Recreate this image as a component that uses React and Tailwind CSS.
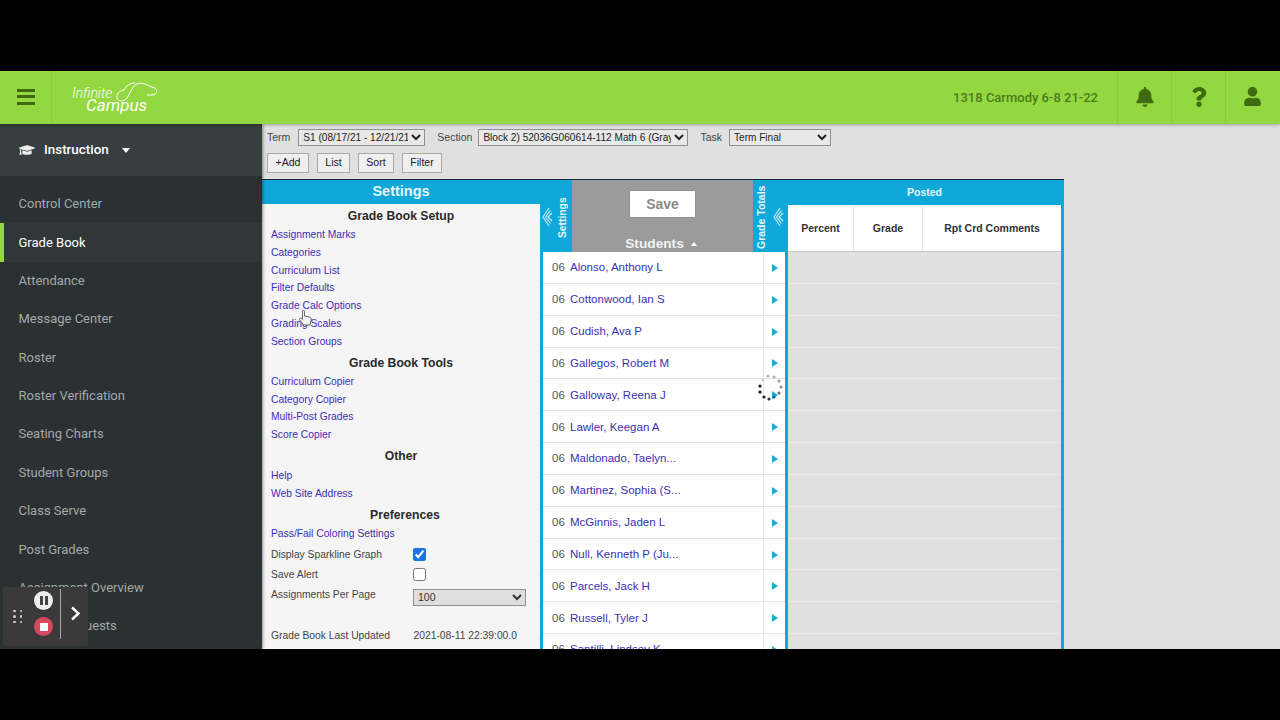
import React from "react";
import { FaBell, FaGraduationCap, FaQuestion, FaUser } from "react-icons/fa";

const navItems = [
  "Control Center",
  "Grade Book",
  "Attendance",
  "Message Center",
  "Roster",
  "Roster Verification",
  "Seating Charts",
  "Student Groups",
  "Class Serve",
  "Post Grades",
  "Assignment Overview",
  "Course Requests",
];

const students = [
  "Alonso, Anthony L",
  "Cottonwood, Ian S",
  "Cudish, Ava P",
  "Gallegos, Robert M",
  "Galloway, Reena J",
  "Lawler, Keegan A",
  "Maldonado, Taelyn...",
  "Martinez, Sophia (S...",
  "McGinnis, Jaden L",
  "Null, Kenneth P (Ju...",
  "Parcels, Jack H",
  "Russell, Tyler J",
  "Santilli, Lindsey K",
];

const setup = ["Assignment Marks", "Categories", "Curriculum List", "Filter Defaults", "Grade Calc Options", "Grading Scales", "Section Groups"];
const tools = ["Curriculum Copier", "Category Copier", "Multi-Post Grades", "Score Copier"];
const other = ["Help", "Web Site Address"];

const spinnerDots = [
  [23, 5, "#b5b5b5"], [29, 6, "#b5b5b5"], [34, 10, "#a0a0a0"], [36, 16, "#909090"],
  [34, 22, "#707070"], [29, 26, "#1b5fa8"], [24, 28, "#333"], [19, 26, "#222"],
  [15, 21, "#111"], [15, 15, "#111"], [18, 9, "#d0d0d0"],
];

function DoubleChevron() {
  return (
    <svg width="11" height="20" viewBox="0 0 11 20" fill="none" stroke="#d8eef8" strokeWidth="1.1">
      <polyline points="7,1 1,10 7,19" />
      <polyline points="8.5,3.5 3.5,10 8.5,16.5" />
      <polyline points="10,6 6,10 10,14" />
    </svg>
  );
}

function LinkList({ items }) {
  return (
    <ul>
      {items.map((name) => (
        <li key={name} className="h-[17.8px] leading-[17.8px] text-[#3a2fb5]">{name}</li>
      ))}
    </ul>
  );
}

function SectionTitle({ children, className }) {
  return <h3 className={`text-center text-[12.2px] font-bold text-[#2a2a2a] ${className}`}>{children}</h3>;
}

function ToolButton({ children, className }) {
  return (
    <button className={`h-[20px] border border-[#a8a8a8] bg-[#efefef] text-[10.5px] text-[#222] ${className}`}>
      {children}
    </button>
  );
}

export default function App() {
  return (
    <div className="relative h-[720px] w-[1280px] overflow-hidden bg-black py-[71px] font-['Liberation_Sans',sans-serif]">
      <div className="flex h-[578px] flex-col overflow-hidden bg-[#e0e0e0]">
        {/* Header */}
        <header className="z-20 flex h-[53px] shrink-0 items-stretch bg-[#93d840] shadow-[0_1px_3px_rgba(0,0,0,0.3)]">
          <div className="flex w-[52px] items-center justify-center border-r border-[#88cb3a] pb-[2px]">
            <div className="flex w-[18px] flex-col gap-[3.5px]">
              <span className="h-[3px] bg-[#3f6b10]" />
              <span className="h-[3px] bg-[#3f6b10]" />
              <span className="h-[3px] bg-[#3f6b10]" />
            </div>
          </div>
          <div className="relative ml-[20px] flex w-[86px] flex-col pt-[16px] font-['Roboto',sans-serif] italic text-white">
            <span className="text-[14px] font-light leading-[12px]">Infinite</span>
            <span className="ml-[14px] text-[17px] leading-[12px]">Campus</span>
            <svg className="absolute left-[44px] top-[11px]" width="42" height="21" viewBox="0 0 42 21" fill="none" stroke="#fff" strokeWidth="1">
              <path d="M8 8 C3 9 0 12 1 16 C2 20 8 20 11 16 C14 12 16 3 22 1.5 C29 0 33 5 39 6 C42 8 41 13 36 13 L31 13" />
              <path d="M8 8 C10 4 14 1 19 1" />
            </svg>
          </div>
          <div className="ml-auto flex items-center pr-[19px] font-['Roboto',sans-serif] text-[13px] font-medium text-[#4b7a1c]">
            1318 Carmody 6-8 21-22
          </div>
          <div className="flex w-[54px] items-center justify-center border-l border-[#88cb3a] pb-[2px] text-[#3f6b10]"><FaBell size={20} /></div>
          <div className="flex w-[54px] items-center justify-center border-l border-[#88cb3a] pb-[2px] text-[#3f6b10]"><FaQuestion size={20} /></div>
          <div className="flex w-[55px] items-center justify-center border-l border-[#88cb3a] pb-[2px] pr-[2px] text-[#3f6b10]"><FaUser size={19} /></div>
        </header>

        <div className="flex min-h-0 flex-1">
          {/* Sidebar */}
          <aside className="z-10 w-[262px] shrink-0 overflow-hidden bg-[#2b3133] font-['Roboto',sans-serif] text-[13px] shadow-[1px_0_3px_rgba(0,0,0,0.4)]">
            <div className="flex h-[52px] items-center bg-[#373e40] pl-[19px] text-[13.4px] font-medium text-white">
              <FaGraduationCap size={16} className="text-[#eee]" />
              <span className="ml-[9px]">Instruction</span>
              <span className="ml-[13px] h-0 w-0 border-x-[4px] border-t-[5px] border-x-transparent border-t-white" />
            </div>
            <nav className="pt-[9px]">
              {navItems.map((item) => (
                <div
                  key={item}
                  className={
                    item === "Grade Book"
                      ? "flex h-[38.35px] items-center border-l-[4px] border-[#93d840] bg-[#313739] pl-[14.5px] text-white"
                      : "flex h-[38.35px] items-center pl-[18.5px] text-[#a3a8a9]"
                  }
                >
                  {item}
                </div>
              ))}
            </nav>
          </aside>

          <main className="min-w-0 flex-1">
            {/* Term / section filters */}
            <div className="mb-[2px] flex h-[27px] items-center pl-[5px] text-[10.5px] text-[#444]">
              <span>Term</span>
              <select className="ml-[8px] h-[16.5px] w-[127px] border border-[#8f8f8f] bg-[#e8e8e8] text-[10.1px] text-[#222]">
                <option>S1 (08/17/21 - 12/21/21)</option>
              </select>
              <span className="ml-[12px]">Section</span>
              <select className="ml-[6px] h-[16.5px] w-[210px] border border-[#8f8f8f] bg-[#e8e8e8] text-[10.1px] text-[#222]">
                <option>Block 2) 52036G060614-112 Math 6 (Gray)</option>
              </select>
              <span className="ml-[12px]">Task</span>
              <select className="ml-[7px] h-[16.5px] w-[102px] border border-[#8f8f8f] bg-[#e8e8e8] text-[10.1px] text-[#222]">
                <option>Term Final</option>
              </select>
            </div>
            <div className="flex h-[20px] gap-[8px] pl-[5px]">
              <ToolButton className="w-[42px]">+Add</ToolButton>
              <ToolButton className="w-[33px]">List</ToolButton>
              <ToolButton className="w-[36px]">Sort</ToolButton>
              <ToolButton className="w-[40px]">Filter</ToolButton>
            </div>

            {/* Grade book panel */}
            <section className="mt-[6px] flex h-[470px] w-[802px] overflow-hidden border-t border-[#1a2a33] bg-[#0fa8d8]">
              {/* Settings */}
              <div className="w-[278px] shrink-0">
                <div className="flex h-[24px] items-center justify-center bg-[#0fa8d8] text-[14.5px] font-bold text-[#e6f6fc]">Settings</div>
                <div className="h-[446px] overflow-hidden bg-[#f5f5f5] px-[9px] text-[10.3px]">
                  <SectionTitle className="pt-[5px] leading-[15px]">Grade Book Setup</SectionTitle>
                  <div className="mt-[2px]"><LinkList items={setup} /></div>
                  <SectionTitle className="mt-[5px] leading-[15px]">Grade Book Tools</SectionTitle>
                  <div className="mt-[2.3px]"><LinkList items={tools} /></div>
                  <SectionTitle className="mt-[4.7px] leading-[15px]">Other</SectionTitle>
                  <div className="mt-[3px]"><LinkList items={other} /></div>
                  <SectionTitle className="ml-[8px] mt-[5.6px] leading-[15px]">Preferences</SectionTitle>
                  <div className="mt-[2.4px] h-[17.8px] leading-[17.8px] text-[#3a2fb5]">Pass/Fail Coloring Settings</div>
                  <div className="mt-[2.4px] flex h-[18px] items-center text-[#444]">
                    <span className="w-[142px]">Display Sparkline Graph</span>
                    <input type="checkbox" defaultChecked className="-mt-[1px] h-[13px] w-[13px] accent-[#1a73e8]" />
                  </div>
                  <div className="mt-[2.6px] flex h-[18px] items-center text-[#444]">
                    <span className="w-[142px]">Save Alert</span>
                    <input type="checkbox" className="-mt-[1px] h-[13px] w-[13px]" />
                  </div>
                  <div className="mt-[2.6px] flex h-[18px] items-start text-[#444]">
                    <span className="w-[142px]">Assignments Per Page</span>
                    <select className="mt-[2px] h-[17px] w-[113px] border border-[#8f8f8f] bg-[#dedede] text-[10.5px] text-[#333]">
                      <option>100</option>
                    </select>
                  </div>
                  <div className="mt-[23px] flex text-[#444]">
                    <span className="w-[142.5px]">Grade Book Last Updated</span>
                    <span>2021-08-11 22:39:00.0</span>
                  </div>
                </div>
              </div>

              {/* Students */}
              <div className="w-[248px] shrink-0">
                <div className="flex h-[72px] text-white">
                  <div className="flex w-[32px] items-start bg-[#0fa8d8] pl-[2px]">
                    <span className="mt-[27px]"><DoubleChevron /></span>
                    <span className="ml-[4px] mt-[17px] h-[41px] rotate-180 text-[10.3px] font-bold leading-[12px] text-[#e6f6fc] [writing-mode:vertical-rl]">Settings</span>
                  </div>
                  <div className="flex w-[181px] flex-col items-center bg-[#9b9b9b] pt-[11px]">
                    <button className="h-[26px] w-[65px] shrink-0 bg-white text-[14px] font-bold text-[#8a8a8a] shadow-[0_0_1px_rgba(0,0,0,0.4)]">Save</button>
                    <div className="mr-[3px] mt-[19px] flex h-[16px] shrink-0 items-center text-[13.7px] font-bold leading-[16px] text-[#f2f2f2]">
                      Students
                      <span className="ml-[7px] h-0 w-0 border-x-[3.5px] border-b-[4px] border-x-transparent border-b-white" />
                    </div>
                  </div>
                  <div className="flex w-[35px] items-start bg-[#0fa8d8] pt-[5px]">
                    <span className="ml-[1px] h-[64px] rotate-180 text-[10.5px] font-bold leading-[14px] text-[#e6f6fc] [writing-mode:vertical-rl]">Grade Totals</span>
                    <span className="ml-[5px] mt-[22px]"><DoubleChevron /></span>
                  </div>
                </div>
                <div className="mx-[3px] w-[242px] bg-white">
                  {students.map((name) => (
                    <div key={name} className="flex h-[31.85px] items-center border-b border-[#e4e4e4] pt-[1px] text-[11.5px]">
                      <span className="ml-[9px] w-[18px] text-[#555]">06</span>
                      <span className="text-[#3a2fb5]">{name}</span>
                      <span className="ml-auto flex h-full w-[22px] items-center justify-center border-l border-[#e8e8e8]">
                        <span className="h-0 w-0 border-y-[4px] border-l-[6px] border-y-transparent border-l-[#1fa9d8]" />
                      </span>
                    </div>
                  ))}
                </div>
              </div>

              {/* Posted */}
              <div className="w-[273px] shrink-0">
                <div className="flex h-[25px] items-center justify-center bg-[#0fa8d8] text-[10.5px] font-bold text-[#e6f6fc]">Posted</div>
                <div className="flex h-[47px] items-center border-b border-[#c9c9c9] bg-white text-center text-[10.5px] font-bold text-[#333]">
                  <div className="flex h-full w-[66px] items-center justify-center border-r border-[#e4e4e4] pt-[2px]">Percent</div>
                  <div className="flex h-full w-[69px] items-center justify-center border-r border-[#e4e4e4] pt-[2px]">Grade</div>
                  <div className="mt-[2px] flex-1">Rpt Crd Comments</div>
                </div>
                {students.map((name) => (
                  <div key={name} className="flex h-[31.85px] border-b border-[#eaeaea] bg-[#e0e0e0]">
                    <div className="w-[66px] border-r border-[#e4e4e4]" />
                    <div className="w-[69px] border-r border-[#e4e4e4]" />
                  </div>
                ))}
              </div>
            </section>
          </main>
        </div>
      </div>

      {/* Loading spinner */}
      <svg className="absolute left-[745px] top-[371px] z-30" width="48" height="36" viewBox="0 0 48 36">
        {spinnerDots.map(([x, y, c]) => (
          <circle key={`${x}-${y}`} cx={x} cy={y} r="1.6" fill={c} />
        ))}
      </svg>

      {/* Mouse cursor */}
      <svg className="absolute left-[297px] top-[309px] z-30" width="16" height="18" viewBox="0 0 15 18" fill="#f4f4f4" stroke="#444" strokeWidth="0.8">
        <path d="M5 1.5 C6 1 7 1.5 7 2.5 V7 L12 8 C13.5 8.5 14 9.5 13.5 11 L12.5 16 H6 L2 10.5 C1.5 9.5 3 8.5 4 9.5 L5 10.5 Z" />
      </svg>

      {/* Screen recorder widget */}
      <div className="absolute left-[3px] top-[587px] z-30 flex h-[59px] w-[85px] items-center rounded-[3px] bg-[#3a3a3a] pb-[6px]">
        <div className="mt-[6px] grid w-[24px] grid-cols-2 justify-items-center gap-y-[3px] pl-[8px] pr-[3px]">
          {[0, 1, 2, 3, 4, 5].map((d) => (
            <span key={d} className="h-[2.5px] w-[2.5px] rounded-full bg-[#cfcfcf]" />
          ))}
        </div>
        <div className="flex w-[30px] flex-col items-center gap-[7px] pl-[3px]">
          <span className="flex h-[19px] w-[19px] items-center justify-center gap-[2px] rounded-full bg-[#eeeeee]">
            <span className="h-[9px] w-[3px] bg-[#444]" />
            <span className="h-[9px] w-[3px] bg-[#444]" />
          </span>
          <span className="flex h-[19px] w-[19px] items-center justify-center rounded-full bg-[#d9475f]">
            <span className="h-[8px] w-[8px] bg-white" />
          </span>
        </div>
        <div className="ml-[3px] h-[50px] w-px bg-[#aaa]" />
        <svg className="ml-[9px]" width="11" height="15" viewBox="0 0 11 15" fill="none" stroke="#fff" strokeWidth="2.4">
          <polyline points="2,1.5 8.5,7.5 2,13.5" />
        </svg>
      </div>
    </div>
  );
}
